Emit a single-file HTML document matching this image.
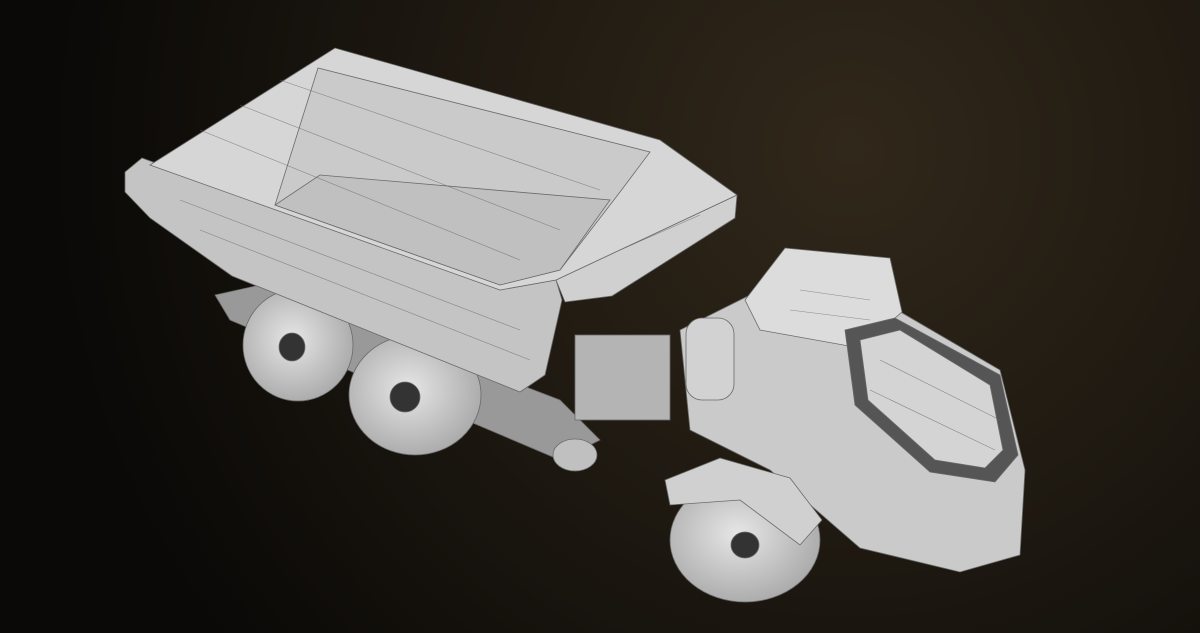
<!DOCTYPE html>
<html><head><meta charset="utf-8"><style>
html,body{margin:0;padding:0;width:1200px;height:633px;overflow:hidden;background:#0c0a07}
svg{display:block}
</style></head><body>
<svg width="1200" height="633" viewBox="0 0 1200 633" xmlns="http://www.w3.org/2000/svg">
<defs>
<radialGradient id="bg" cx="850" cy="150" r="800" gradientUnits="userSpaceOnUse">
<stop offset="0" stop-color="#31281a"/>
<stop offset="0.55" stop-color="#1c1710"/>
<stop offset="1" stop-color="#0a0907"/>
</radialGradient>
<radialGradient id="tire" cx="0.45" cy="0.45" r="0.6">
<stop offset="0" stop-color="#e6e6e6"/><stop offset="1" stop-color="#a8a8a8"/>
</radialGradient>
</defs>
<rect width="1200" height="633" fill="url(#bg)"/>
<g stroke="#6a6a6a" stroke-width="0.8">
<polygon points="215,295 260,285 560,400 600,440 560,460 230,320" fill="#999"/>
<ellipse cx="298" cy="345" rx="55" ry="56" fill="url(#tire)"/>
<ellipse cx="292" cy="347" rx="13" ry="14" fill="#333"/>
<ellipse cx="415" cy="395" rx="66" ry="60" fill="url(#tire)"/>
<ellipse cx="405" cy="397" rx="15" ry="15" fill="#333"/>
<polygon points="125,172 142,158 500,290 556,280 562,300 545,375 520,392 232,276 150,218 125,192" fill="#c4c4c4"/>
<polygon points="556,280 737,195 735,218 612,296 565,302" fill="#d0d0d0"/>
<polygon points="150,165 335,48 660,140 737,195 556,280 500,290" fill="#d6d6d6"/>
<polygon points="275,205 318,68 650,152 620,192 560,270 500,285" fill="#cacaca"/>
<polygon points="275,205 500,285 560,270 610,200 320,175" fill="#c0c0c0"/>
<rect x="575" y="335" width="95" height="85" fill="#b4b4b4"/>
<ellipse cx="575" cy="455" rx="22" ry="16" fill="#c0c0c0"/>
<polygon points="680,330 760,290 880,300 1000,370 1025,470 1020,555 960,572 860,548 770,470 690,430" fill="#cacaca"/>
<polygon points="745,300 785,248 890,258 902,312 860,348 760,330" fill="#dcdcdc"/>
<rect x="686" y="318" width="48" height="82" rx="16" fill="#d2d2d2"/>
<polygon points="845,330 895,318 1000,375 1018,455 995,482 930,472 855,405" fill="#555"/>
<polygon points="860,340 900,330 990,385 1003,450 985,468 935,460 868,400" fill="#d4d4d4"/>
<ellipse cx="745" cy="540" rx="75" ry="62" fill="url(#tire)"/>
<ellipse cx="745" cy="545" rx="14" ry="13" fill="#333"/>
<polygon points="665,480 720,458 790,478 822,520 800,545 740,500 670,505" fill="#d0d0d0"/>
</g>
<g stroke="#666" stroke-width="0.6" fill="none" opacity="0.7">
<line x1="200" y1="130" x2="520" y2="260"/><line x1="240" y1="105" x2="560" y2="230"/>
<line x1="280" y1="80" x2="600" y2="190"/><line x1="180" y1="200" x2="520" y2="330"/>
<line x1="200" y1="230" x2="530" y2="360"/><line x1="620" y1="250" x2="700" y2="215"/>
<line x1="880" y1="360" x2="1000" y2="420"/><line x1="870" y1="390" x2="995" y2="450"/>
<line x1="800" y1="290" x2="870" y2="300"/><line x1="790" y1="310" x2="870" y2="320"/>
</g>
</svg>
</body></html>
